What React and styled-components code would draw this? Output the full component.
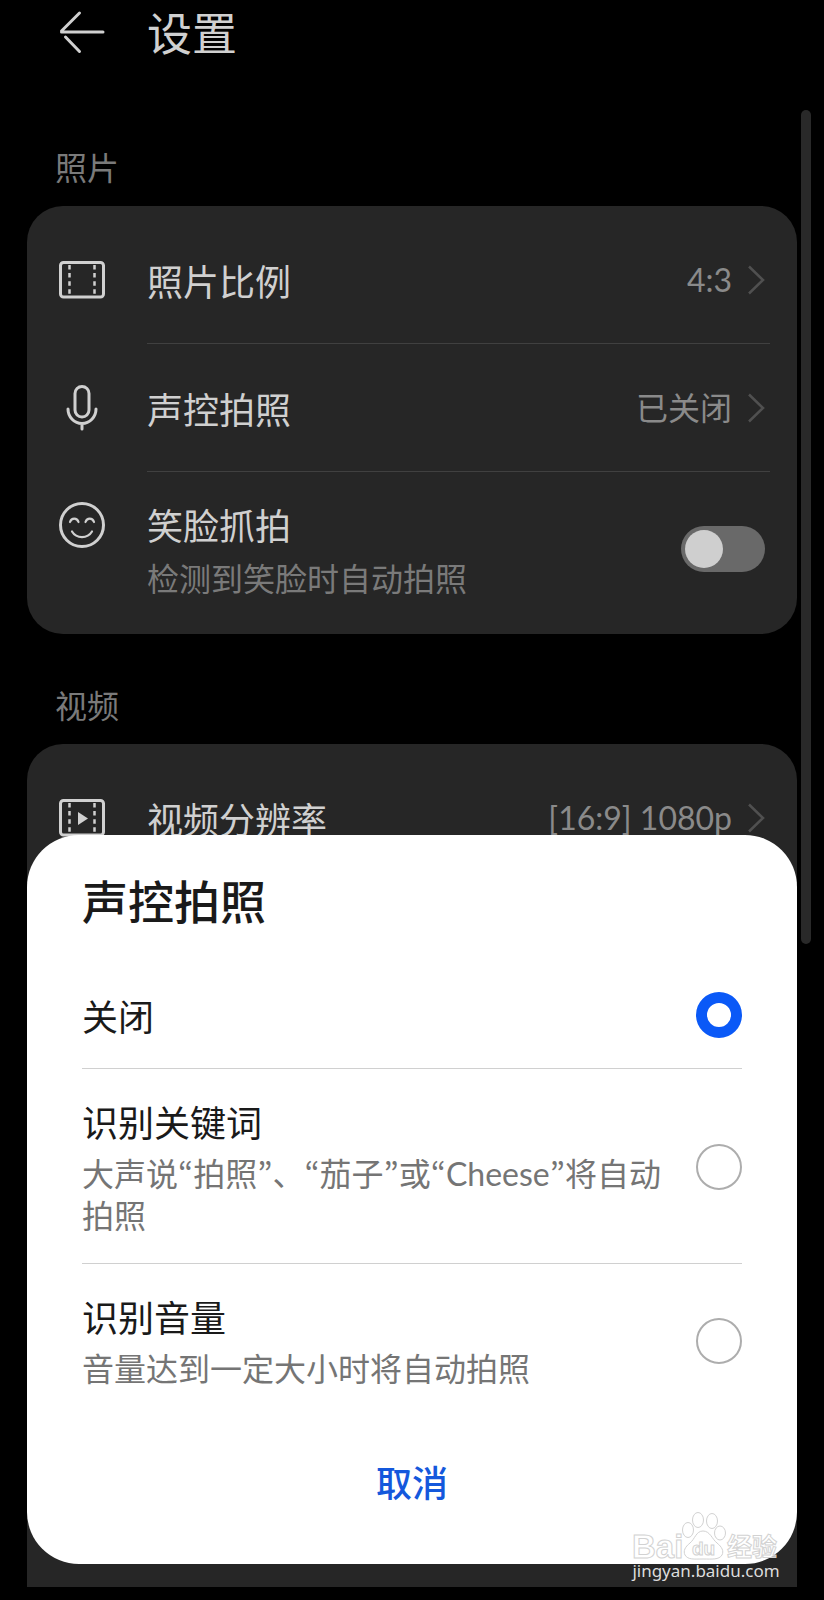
import React, { useState } from "react";
import styled, { createGlobalStyle } from "styled-components";

const GlobalStyle = createGlobalStyle`
  * {
    box-sizing: border-box;
  }
  body {
    margin: 0;
    background: #000;
    font-family: "Noto Sans CJK SC", sans-serif;
  }
  button {
    font: inherit;
    border: 0;
    padding: 0;
    background: none;
    cursor: pointer;
  }
`;

const FilmIcon = ({ play }) => (
  <Icon viewBox="0 0 46 46">
    <rect x="1.500" y="5.500" width="43" height="34.500" rx="3" />
    <path d="M10.500 7v32M35.500 7v32" strokeWidth="2.500" strokeDasharray="4.500 3.600" strokeDashoffset="-1" />
    {play && <path d="M19 17l10 6.500-10 6.500z" fill="currentColor" stroke="none" />}
  </Icon>
);

const MicIcon = () => (
  <Icon viewBox="0 0 46 46">
    <rect x="16" y="1.500" width="14" height="30.500" rx="7" />
    <path d="M9 24a14 14.500 0 0 0 28 0M23 39v5" strokeLinecap="round" />
  </Icon>
);

const SmileIcon = () => (
  <Icon viewBox="0 0 46 46">
    <circle cx="23" cy="23" r="21.500" />
    <path
      d="M11 20c1.500-4.500 7-4.500 8.500 0M26.500 20c1.500-4.500 7-4.500 8.500 0M13 29.500c4.500 7.500 15.500 7.500 20 0"
      strokeWidth="2.200"
      strokeLinecap="round"
    />
  </Icon>
);

const ChevronIcon = () => (
  <Chevron viewBox="0 0 18 30">
    <path d="M2 1.500L16 15 2 28.500" />
  </Chevron>
);

const KeywordNote = () => (
  <>
    大声说<Quote>“</Quote>拍照<Quote>”</Quote>、<Quote>“</Quote>茄子
    <Quote>”</Quote>或<Quote>“</Quote>Cheese<Quote>”</Quote>将自动拍照
  </>
);

const options = [
  { id: "off", title: "关闭" },
  { id: "keyword", title: "识别关键词", note: <KeywordNote /> },
  { id: "volume", title: "识别音量", note: "音量达到一定大小时将自动拍照" },
];

function LinkRow({ icon, label, value, last }) {
  return (
    <Row as="button" type="button">
      {icon}
      <RowBody $last={last}>
        <RowLabel>{label}</RowLabel>
        <RowValue>
          {value}
          <ChevronIcon />
        </RowValue>
      </RowBody>
    </Row>
  );
}

function VoiceSheet() {
  const [selected, setSelected] = useState("off");

  return (
    <Sheet role="dialog" aria-labelledby="sheet-title">
      <SheetTitle id="sheet-title">声控拍照</SheetTitle>
      {options.map(({ id, title, note }) => (
        <Option key={id} htmlFor={id}>
          <OptionText>
            <OptionTitle>{title}</OptionTitle>
            {note && <OptionNote>{note}</OptionNote>}
          </OptionText>
          <Radio
            type="radio"
            name="voice"
            id={id}
            checked={selected === id}
            onChange={() => setSelected(id)}
          />
        </Option>
      ))}
      <Cancel type="button">取消</Cancel>
    </Sheet>
  );
}

function BaiduMark() {
  return (
    <Mark>
      <MarkLogo viewBox="0 0 148 54">
        <text x="0" y="51" fontSize="33" fontFamily="Liberation Sans">Bai</text>
        <ellipse cx="56" cy="23" rx="5.500" ry="7.500" />
        <ellipse cx="66" cy="13" rx="5.500" ry="7.500" />
        <ellipse cx="80" cy="14" rx="5.500" ry="7.500" />
        <ellipse cx="88" cy="26" rx="5.500" ry="7" />
        <path d="M71 24c-7 0-8 8-13 12-5 4-7 8-5 12 3 5 9 4 18 4s16 1 19-4c2-4 0-8-5-12-5-4-7-12-14-12z" />
        <text x="60" y="48" fontSize="19" fontFamily="Liberation Sans">du</text>
        <text x="95" y="49" fontSize="25" fontFamily="Noto Sans CJK SC">经验</text>
      </MarkLogo>
      <MarkUrl>jingyan.baidu.com</MarkUrl>
    </Mark>
  );
}

export default function App() {
  const [smile, setSmile] = useState(false);

  return (
    <Page>
      <GlobalStyle />
      <Header>
        <BackButton type="button" aria-label="返回">
          <Icon viewBox="0 0 46 46">
            <path d="M2.500 23H44M2.500 22L20.500 4M6.500 28l14 14.500" strokeLinecap="round" />
          </Icon>
        </BackButton>
        <Title>设置</Title>
      </Header>

      <Content>
        <SectionLabel>照片</SectionLabel>
        <Card>
          <LinkRow icon={<FilmIcon />} label="照片比例" value="4:3" />
          <LinkRow icon={<MicIcon />} label="声控拍照" value="已关闭" />
          <SwitchRow as="label" htmlFor="smile">
            <SmileIcon />
            <RowBody $last>
              <RowText>
                <RowLabel>笑脸抓拍</RowLabel>
                <RowNote>检测到笑脸时自动拍照</RowNote>
              </RowText>
              <Switch
                type="checkbox"
                id="smile"
                checked={smile}
                onChange={(e) => setSmile(e.target.checked)}
              />
            </RowBody>
          </SwitchRow>
        </Card>

        <SectionLabel>视频</SectionLabel>
        <Card $open>
          <LinkRow icon={<FilmIcon play />} label="视频分辨率" value="[16:9] 1080p" last />
        </Card>
      </Content>

      <ScrollThumb />
      <VoiceSheet />
      <BaiduMark />
    </Page>
  );
}

const Page = styled.div`
  position: relative;
  display: flex;
  flex-direction: column;
  min-height: 100vh;
  padding: 0 27px 13px;
  background: #000;
  color: #d0d0d0;
`;

const Header = styled.header`
  display: flex;
  align-items: center;
  gap: 42px;
  height: 64px;
  padding-left: 32px;
`;

const BackButton = styled.button`
  display: flex;
  color: inherit;
`;

const Title = styled.h1`
  margin: 0;
  font-size: 45px;
  line-height: 64px;
  font-weight: 400;
`;

const Content = styled.main`
  flex: 1;
  display: flex;
  flex-direction: column;
  padding-top: 32px;
`;

const SectionLabel = styled.h2`
  margin: 0;
  padding: 46px 28px 16px;
  font-size: 32px;
  line-height: 48px;
  font-weight: 400;
  color: #7a7a7a;
`;

const Card = styled.section`
  flex: ${(props) => (props.$open ? 1 : "none")};
  padding: 10px 27px 9px 32px;
  border-radius: ${(props) => (props.$open ? "36px 36px 0 0" : "36px")};
  background: #262626;
`;

const Row = styled.div`
  display: flex;
  align-items: center;
  gap: 42px;
  width: 100%;
  color: #d0d0d0;
  text-align: left;
`;

const SwitchRow = styled(Row)`
  align-items: flex-start;

  > svg {
    margin-top: 30px;
  }
`;

const RowBody = styled.div`
  flex: 1;
  display: flex;
  align-items: center;
  justify-content: space-between;
  min-height: ${(props) => (props.$last ? 127 : 128)}px;
  padding-right: 5px;
  border-bottom: ${(props) => (props.$last ? "none" : "1px solid #404040")};
`;

const RowText = styled.div`
  display: flex;
  flex-direction: column;
  gap: 4px;
  padding: 27px 0 24px;
`;

const RowLabel = styled.div`
  font-size: 36px;
  line-height: 50px;
`;

const RowNote = styled.div`
  font-size: 32px;
  line-height: 48px;
  color: #7a7a7a;
`;

const RowValue = styled.div`
  display: flex;
  align-items: center;
  gap: 15px;
  font-family: Lato, "Noto Sans CJK SC", sans-serif;
  font-size: 32px;
  line-height: 48px;
  color: #8a8a8a;
`;

const Icon = styled.svg`
  flex: none;
  width: 46px;
  height: 46px;
  fill: none;
  stroke: currentColor;
  stroke-width: 3;
`;

const Chevron = styled.svg`
  width: 18px;
  height: 30px;
  fill: none;
  stroke: #505050;
  stroke-width: 2.5;
`;

const Switch = styled.input`
  appearance: none;
  flex: none;
  width: 84px;
  height: 46px;
  margin: 0;
  padding: 4px;
  border-radius: 23px;
  background: ${(props) => (props.checked ? "#0a59f7" : "#696969")};
  cursor: pointer;

  &::before {
    content: "";
    display: block;
    width: 38px;
    height: 38px;
    margin-left: ${(props) => (props.checked ? "auto" : 0)};
    border-radius: 50%;
    background: #cfcfcf;
  }
`;

const ScrollThumb = styled.div`
  position: absolute;
  top: 110px;
  right: 13px;
  width: 10px;
  height: 834px;
  border-radius: 5px;
  background: #292929;
`;

const Sheet = styled.div`
  position: absolute;
  left: 27px;
  right: 27px;
  bottom: 36px;
  display: flex;
  flex-direction: column;
  padding: 32px 55px 35px;
  border-radius: 52px;
  background: #fff;
  color: #1a1a1a;
`;

const SheetTitle = styled.h2`
  margin: 0 0 32px;
  font-size: 46px;
  line-height: 64px;
  font-weight: 500;
`;

const Option = styled.label`
  display: flex;
  align-items: center;
  justify-content: space-between;
  gap: 24px;
  padding: 27px 0 28px;
  cursor: pointer;

  & + & {
    padding-bottom: 26px;
    border-top: 1px solid #d0d0d0;
  }
`;

const OptionText = styled.div`
  flex: 1;
`;

const OptionTitle = styled.div`
  font-size: 36px;
  line-height: 50px;
`;

const OptionNote = styled.div`
  padding-top: 7px;
  font-family: Lato, "Noto Sans CJK SC", sans-serif;
  font-size: 32px;
  line-height: 42px;
  color: #757575;
`;

const Quote = styled.span`
  font-family: "Noto Sans CJK KR", sans-serif;
  line-height: 1;
`;

const Radio = styled.input`
  appearance: none;
  flex: none;
  width: 46px;
  height: 46px;
  margin: 0;
  border: 2px solid #adadad;
  border-radius: 50%;
  background: #fff;
  cursor: pointer;

  &:checked {
    border: 11px solid #0a59f7;
  }
`;

const Cancel = styled.button`
  height: 96px;
  margin-top: 17px;
  font-size: 36px;
  line-height: 50px;
  font-weight: 500;
  color: #1458dc;
`;

const Mark = styled.div`
  position: absolute;
  right: 44px;
  bottom: 19px;
  display: flex;
  flex-direction: column;
  align-items: center;
`;

const MarkLogo = styled.svg`
  width: 148px;
  height: 54px;
  overflow: visible;
  fill: rgba(255, 255, 255, 0.7);
  stroke: #d2d2d2;
  stroke-width: 1;
  font-weight: 700;
`;

const MarkUrl = styled.div`
  font-family: "Noto Sans", sans-serif;
  font-size: 17px;
  line-height: 20px;
  color: #dcdcdc;
`;
